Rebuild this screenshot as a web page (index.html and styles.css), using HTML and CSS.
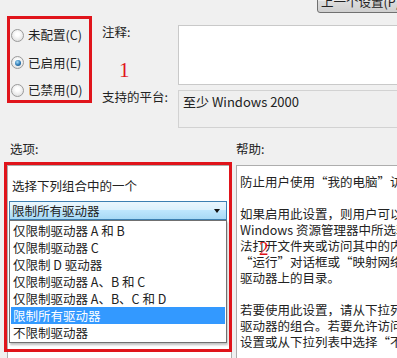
FILE: index.html
```html
<!DOCTYPE html>
<html lang="zh-CN">
<head>
    <meta charset="UTF-8">
    <meta name="viewport" content="width=device-width, initial-scale=1.0">
    <title>阻止从“我的电脑”访问驱动器</title>
    <link rel="stylesheet" href="styles.css">
</head>
<body>

<div class="top">
    <button class="btn">上一个设置(P)</button>
</div>

<div class="upper">
    <div class="state-box">
        <label class="state"><span class="radio"></span>未配置(C)</label>
        <label class="state"><span class="radio on"></span>已启用(E)</label>
        <label class="state"><span class="radio"></span>已禁用(D)</label>
    </div>

    <div class="fields">
        <div class="field-label">注释:</div>
        <div class="comment"></div>
        <div class="field-label">支持的平台:</div>
        <div class="platform">至少 Windows 2000</div>
        <span class="mark mark-1">1</span>
    </div>
</div>

<div class="lower">
    <div class="section-label">选项:</div>
    <div class="section-label">帮助:</div>

    <div class="options">
        <div class="options-caption">选择下列组合中的一个</div>
        <div class="combo">
            <span>限制所有驱动器</span>
            <span class="arrow"></span>
        </div>
        <ul class="combo-list">
            <li>仅限制驱动器 A 和 B</li>
            <li>仅限制驱动器 C</li>
            <li>仅限制 D 驱动器</li>
            <li>仅限制驱动器 A、B 和 C</li>
            <li>仅限制驱动器 A、B、C 和 D</li>
            <li class="picked">限制所有驱动器</li>
            <li>不限制驱动器</li>
        </ul>
        <div class="frame-2"></div>
    </div>

    <div class="help">
        <div>防止用户使用“我的电脑”访问所选驱动器的内容。</div>
        <div>&nbsp;</div>
        <div>如果启用此设置，则用户可以浏览“我的电脑”或</div>
        <div>Windows 资源管理器中所选驱动器的目录结构，但无</div>
        <div>法打开文件夹或访问其中的内容。而且，他们不能使用</div>
        <div>“运行”对话框或“映射网络驱动器”对话框查看这些</div>
        <div>驱动器上的目录。</div>
        <div>&nbsp;</div>
        <div>若要使用此设置，请从下拉列表中选择驱动器或</div>
        <div>驱动器的组合。若要允许访问所有驱动器目录，请禁用此</div>
        <div>设置或从下拉列表中选择“不限制驱动器”选项。</div>
        <span class="mark mark-2">2</span>
    </div>
</div>

</body>
</html>
```

FILE: styles.css
```css
html, body { margin: 0; height: 100%; }
body {
    width: 397px;
    height: 358px;
    overflow: hidden;
    background-color: #f0f0f0;
    font-family: "Noto Sans CJK SC", "Noto Sans", sans-serif;
    font-size: 12.5px;
    color: #222;
}

/* top button, cut off by the window edge */
.top { height: 13px; display: flex; justify-content: flex-end; }
.btn {
    flex: none;
    width: 120px;
    height: 24px;
    margin-top: -11px;
    margin-right: -40px;
    padding: 0 0 0 3px;
    text-align: left;
    font: inherit;
    color: #222;
    line-height: 24px;
    border: 1px solid #707070;
    border-radius: 3px;
    background: linear-gradient(#f2f2f2 0%, #ebebeb 50%, #dddddd 50%, #cfcfcf 100%);
}

/* state radios + comment / platform */
.upper { display: flex; padding-left: 7px; margin-top: 3px; }
.state-box {
    flex: none;
    width: 85px;
    height: 87px;
    box-sizing: border-box;
    border: 3px solid #e0141b;
    padding: 9px 0 0 1px;
    display: flex;
    flex-direction: column;
    gap: 13.5px;
}
.state { display: flex; align-items: center; gap: 4px; height: 14px; line-height: 14px; white-space: nowrap; }
.radio {
    position: relative;
    width: 11px;
    height: 11px;
    border-radius: 50%;
    border: 1px solid #9a9a9a;
    background: radial-gradient(circle at 50% 40%, #ffffff 20%, #d6d6d6 100%);
}
.radio.on::after {
    content: "";
    position: absolute;
    left: 2.5px;
    top: 2.5px;
    width: 6px;
    height: 6px;
    border-radius: 50%;
    background: radial-gradient(circle at 40% 35%, #a8dcf7 0%, #2a78b4 55%, #123f6b 100%);
}

.fields {
    position: relative;
    margin-left: 10px;
    margin-top: 9px;
    display: grid;
    grid-template-columns: 76px 260px;
    grid-template-rows: 60px 38px;
    row-gap: 5px;
}
.field-label { line-height: 14px; white-space: nowrap; }
.comment { background: #fff; border: 1px solid #c9c9c9; }
.platform {
    box-sizing: border-box;
    border: 1px solid #d2d2d2;
    background: #efefef;
    padding: 4px 0 0 4px;
    line-height: 14px;
    font-size: 13px;
}

.mark { position: absolute; color: #e0141b; font-family: "Liberation Serif", serif; }
.mark-1 { left: 17px; top: 33px; font-size: 21px; }

/* options + help */
.lower {
    display: grid;
    grid-template-columns: 227px 170px;
    column-gap: 4px;
    padding-left: 5px;
    margin-top: 14px;
}
.section-label { line-height: 14px; padding-left: 5px; margin-bottom: 7px; }
.section-label + .section-label { padding-left: 0; }

.options {
    position: relative;
    height: 220px;
    margin: 2px 0 0 2px;
    box-sizing: border-box;
    background: #fff;
    border: 1px solid #adadad;
    padding: 13px 0 0 1px;
}
.options-caption { line-height: 14px; padding-left: 3px; margin-bottom: 8px; }
.combo {
    width: 218px;
    height: 19px;
    box-sizing: border-box;
    border: 1px solid #3c7fb1;
    background: linear-gradient(#eaf6fd 0%, #d9f0fc 50%, #bee6fd 50%, #a7d9f5 100%);
    display: flex;
    align-items: center;
    justify-content: space-between;
    padding: 0 6px 0 2px;
    line-height: 17px;
}
.arrow {
    width: 0;
    height: 0;
    border-left: 3.5px solid transparent;
    border-right: 3.5px solid transparent;
    border-top: 4px solid #111;
}
.combo-list {
    list-style: none;
    margin: 0;
    width: 218px;
    box-sizing: border-box;
    padding: 1px;
    background: #fff;
    border: 1px solid #707070;
    box-shadow: 1px 2px 2px rgba(0, 0, 0, 0.25);
}
.combo-list li { height: 17px; line-height: 17px; padding-left: 2px; white-space: nowrap; }
.combo-list li.picked { background: #3399ff; color: #fff; }

.frame-2 {
    position: absolute;
    left: -4px;
    top: -4px;
    width: 228px;
    height: 190px;
    box-sizing: border-box;
    border: 3px solid #e0141b;
}

.help {
    position: relative;
    height: 220px;
    margin-top: 2px;
    box-sizing: border-box;
    background: #fff;
    border: 1px solid #adadad;
    padding: 8px 0 0 3px;
    line-height: 16px;
    white-space: nowrap;
    overflow: hidden;
}
.mark-2 { left: 22px; top: 75px; font-size: 19px; }
```
